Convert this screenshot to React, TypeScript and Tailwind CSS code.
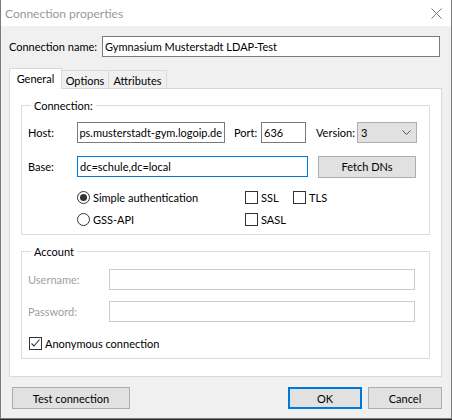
import React from 'react';

const font = { fontFamily: 'Lato, "Liberation Sans", sans-serif' };

const CheckBox = ({ checked = false }: { checked?: boolean }) => (
  <span className="flex h-[13px] w-[13px] shrink-0 items-center justify-center border border-[#333333] bg-white">
    {checked && (
      <svg width="11" height="11" viewBox="0 0 11 11">
        <polyline points="1.5,5.5 4,8 9.5,1.5" fill="none" stroke="#333333" strokeWidth="1.1" />
      </svg>
    )}
  </span>
);

const Radio = ({ checked = false }: { checked?: boolean }) => (
  <span className="flex h-[13px] w-[13px] shrink-0 items-center justify-center rounded-full border border-[#333333] bg-white">
    {checked && <span className="h-[7px] w-[7px] rounded-full bg-[#333333]" />}
  </span>
);

const Button = ({
  children,
  width,
  primary = false,
}: {
  children: React.ReactNode;
  width: string;
  primary?: boolean;
}) => (
  <div
    className={`flex h-[22px] items-center justify-center bg-[#e1e1e1] text-black whitespace-nowrap ${width} ${
      primary ? 'border-2 border-[#0078d7]' : 'border border-[#adadad]'
    }`}
  >
    {children}
  </div>
);

export default function App() {
  return (
    <div
      className="h-[420px] w-[452px] bg-[#2b2b2b] text-[11px] leading-[15px] whitespace-nowrap text-black"
      style={font}
    >
      <div className="flex h-[419px] w-[452px] flex-col border-x border-b border-[#7a7a7a] bg-[#f0f0f0]">
        {/* title bar */}
        <div className="flex h-[26px] shrink-0 items-center justify-between bg-white pl-[4px] pr-[9px]">
          <span className="text-[12px] text-[#999999]">Connection properties</span>
          <svg width="11" height="11" viewBox="0 0 11 11">
            <path d="M0.5 0.5 L10.5 10.5 M10.5 0.5 L0.5 10.5" stroke="#777777" strokeWidth="1" />
          </svg>
        </div>

        {/* connection name */}
        <div className="mt-[10px] flex h-[21px] items-center pl-[8px]">
          <span className="w-[93px]">Connection name:</span>
          <div className="flex h-[21px] w-[338px] items-center border border-[#7a7a7a] bg-white px-[2px]">
            Gymnasium Musterstadt LDAP-Test
          </div>
        </div>

        {/* tabs */}
        <div className="mt-[11px] flex h-[21px] items-end pl-[8px]">
          <div className="z-10 flex h-[21px] w-[53px] items-start justify-center border border-b-0 border-[#d9d9d9] bg-white pt-[2px]">
            General
          </div>
          <div className="flex h-[19px] w-[47px] items-start justify-center border border-l-0 border-b-0 border-[#d9d9d9] pt-[2px]">
            Options
          </div>
          <div className="flex h-[19px] w-[58px] items-start justify-center border border-l-0 border-b-0 border-[#d9d9d9] pt-[2px]">
            Attributes
          </div>
        </div>

        {/* tab panel */}
        <div className="-mt-px ml-[8px] flex h-[289px] w-[433px] flex-col border border-[#d9d9d9] bg-white px-[11px]">
          <fieldset className="mt-[9px] h-[137px] w-[409px] border border-[#dcdcdc] px-[6px]">
            <legend className="ml-[3px] px-[3px]">Connection:</legend>
            <div className="mt-[9px] flex h-[21px] items-center">
              <span className="w-[49px]">Host:</span>
              <div className="flex h-[21px] w-[148px] items-center justify-end overflow-hidden border border-[#7a7a7a] bg-white pr-[2px]">
                <span className="shrink-0">ps.musterstadt-gym.logoip.de</span>
              </div>
              <span className="ml-[9px] w-[27px]">Port:</span>
              <div className="flex h-[21px] w-[45px] items-center border border-[#7a7a7a] bg-white px-[2px]">636</div>
              <span className="ml-[10px] w-[41px]">Version:</span>
              <div className="flex h-[21px] w-[60px] items-center justify-between border border-[#adadad] bg-[#e1e1e1] pl-[3px] pr-[5px]">
                <span>3</span>
                <svg width="9" height="6" viewBox="0 0 9 6">
                  <polyline points="0.5,0.5 4.5,4.5 8.5,0.5" fill="none" stroke="#555555" strokeWidth="1" />
                </svg>
              </div>
            </div>
            <div className="mt-[13px] flex h-[21px] items-center">
              <span className="w-[49px]">Base:</span>
              <div className="flex h-[21px] w-[231px] items-center border border-[#0078d7] bg-white px-[2px]">
                dc=schule,dc=local
              </div>
              <div className="ml-[10px]">
                <Button width="w-[98px]">Fetch DNs</Button>
              </div>
            </div>
            <div className="mt-[13px] flex">
              <div className="flex w-[217px] shrink-0 flex-col gap-[7px] pl-[49px]">
                <div className="flex items-center gap-[3px]">
                  <Radio checked />
                  <span>Simple authentication</span>
                </div>
                <div className="flex items-center gap-[3px]">
                  <Radio />
                  <span>GSS-API</span>
                </div>
              </div>
              <div className="flex flex-col gap-[7px]">
                <div className="flex items-center">
                  <div className="flex w-[48px] items-center gap-[3px]">
                    <CheckBox />
                    <span>SSL</span>
                  </div>
                  <div className="flex items-center gap-[3px]">
                    <CheckBox />
                    <span>TLS</span>
                  </div>
                </div>
                <div className="flex items-center gap-[3px]">
                  <CheckBox />
                  <span>SASL</span>
                </div>
              </div>
            </div>
          </fieldset>

          <fieldset className="mt-[9px] h-[115px] w-[409px] border border-[#dcdcdc] px-[6px]">
            <legend className="ml-[3px] px-[3px]">Account</legend>
            <div className="mt-[10px] flex h-[21px] items-center">
              <span className="w-[81px] text-[#a0a0a0]">Username:</span>
              <div className="h-[21px] w-[306px] border border-[#cccccc] bg-white" />
            </div>
            <div className="mt-[11px] flex h-[21px] items-center">
              <span className="w-[81px] text-[#a0a0a0]">Password:</span>
              <div className="h-[21px] w-[306px] border border-[#cccccc] bg-white" />
            </div>
            <div className="mt-[14px] flex items-center gap-[3px] pl-px">
              <CheckBox checked />
              <span>Anonymous connection</span>
            </div>
          </fieldset>
        </div>

        {/* footer buttons */}
        <div className="mt-[10px] flex items-center pl-[11px]">
          <Button width="w-[118px]">Test connection</Button>
          <div className="ml-[158px]">
            <Button width="w-[74px]" primary>
              OK
            </Button>
          </div>
          <div className="ml-[6px]">
            <Button width="w-[74px]">Cancel</Button>
          </div>
        </div>
      </div>
    </div>
  );
}
